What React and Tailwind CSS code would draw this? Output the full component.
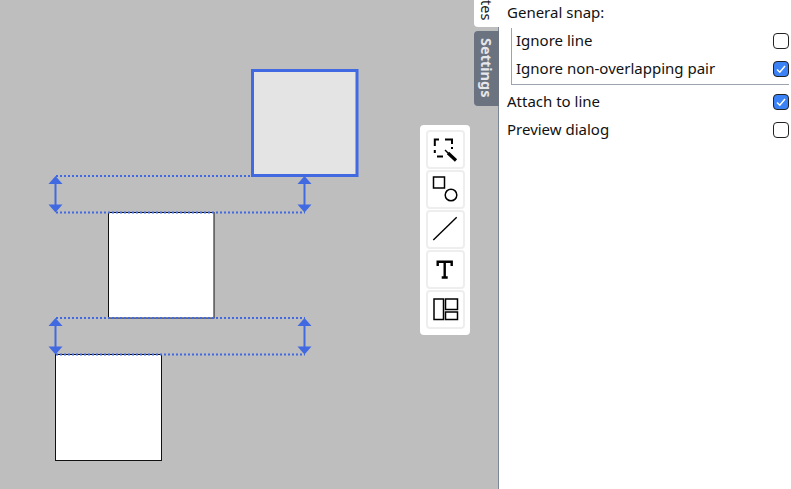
import React from 'react';

const BLUE = '#4169e1';

const Gap = ({ top, bottom, right }) => (
  <g>
    <line x1="56" y1={top} x2={right} y2={top} stroke={BLUE} strokeWidth="2" strokeDasharray="2 2" />
    <line x1="56" y1={bottom} x2="305" y2={bottom} stroke={BLUE} strokeWidth="2" strokeDasharray="2 2" />
    {[55.5, 304.5].map((x) => (
      <g key={x} fill={BLUE}>
        <line x1={x} y1={top + 4} x2={x} y2={bottom - 4} stroke={BLUE} strokeWidth="2" />
        <path d={`M${x} ${top} L${x + 7} ${top + 8} L${x - 7} ${top + 8} Z`} />
        <path d={`M${x} ${bottom} L${x + 7} ${bottom - 8} L${x - 7} ${bottom - 8} Z`} />
      </g>
    ))}
  </g>
);

const Canvas = () => (
  <svg width="498" height="489" className="block">
    <rect x="252.5" y="70.5" width="104.5" height="105" fill="#e4e4e4" stroke={BLUE} strokeWidth="3" />
    <rect x="108.5" y="212.5" width="105.5" height="105.5" fill="#fff" stroke="#111" />
    <rect x="55.5" y="354.5" width="106" height="106" fill="#fff" stroke="#111" />
    <Gap top={176} bottom={212.5} right={251} />
    <Gap top={318} bottom={354.5} right={305} />
  </svg>
);

const ToolButton = ({ children }) => (
  <div className="h-[39px] w-[39px] rounded-[4px] border-2 border-[#eeeeee]">
    <svg width="39" height="39" viewBox="0 0 39 39" fill="none" stroke="#000" className="-m-[2px] block">
      {children}
    </svg>
  </div>
);

const Toolbar = () => (
  <div className="absolute left-[420px] top-[125px] flex w-[50px] flex-col gap-[1px] rounded-[4px] bg-white pb-[6px] pl-[6px] pt-[5px]">
    <ToolButton>
      <path d="M13 9.5H8.8V16M8.8 20V23M11 26.5H17M19 9.5H26V14M26 17V19" strokeWidth="2" />
      <path d="M19 20L23 24" strokeWidth="1.4" />
      <path d="M22 23L30 30.5" strokeWidth="3.2" />
    </ToolButton>
    <ToolButton>
      <rect x="7.5" y="7" width="11" height="11" strokeWidth="1.5" />
      <circle cx="25" cy="25" r="5.8" strokeWidth="1.5" />
    </ToolButton>
    <ToolButton>
      <path d="M7.3 30L30.7 7.3" strokeWidth="1.4" />
    </ToolButton>
    <ToolButton>
      <path d="M11.7 16V11.7H25.7V16M18.7 11.7V27.5M15.7 27.5H21.7" strokeWidth="2.4" />
    </ToolButton>
    <ToolButton>
      <rect x="8" y="9" width="9.5" height="20.5" strokeWidth="1.5" />
      <rect x="19.5" y="9" width="12" height="10.5" strokeWidth="1.5" />
      <rect x="19.5" y="22" width="12" height="7.5" strokeWidth="1.5" />
    </ToolButton>
  </div>
);

const Tabs = () => (
  <div className="absolute left-[474px] top-0 flex w-[25px] flex-col gap-[4px] font-['Noto_Sans',sans-serif] leading-[24px]">
    <div className="flex h-[27px] items-end justify-center rounded-bl-[4px] bg-white pb-[7px] text-[14.5px] text-[#222]">
      <span className="[writing-mode:vertical-rl]">tes</span>
    </div>
    <div className="flex h-[75px] items-start justify-center rounded-l-[4px] bg-[#6b7280] pt-[7px] text-[14.5px] font-bold text-[#e5e7eb]">
      <span className="[writing-mode:vertical-rl]">Settings</span>
    </div>
  </div>
);

const Check = ({ checked }) =>
  checked ? (
    <div className="flex h-[16px] w-[16px] items-center justify-center rounded-[4px] border border-[#222] bg-[#3b82f6]">
      <svg width="12" height="12" viewBox="0 0 12 12" fill="none" stroke="#fff" strokeWidth="1.5">
        <path d="M2 6.5L4.8 9.2L10 3" />
      </svg>
    </div>
  ) : (
    <div className="h-[16px] w-[16px] rounded-[4px] border border-[#222] bg-white" />
  );

const Row = ({ label, checked, className }) => (
  <div className={`flex items-center justify-between ${className}`}>
    <span className="pb-[2px]">{label}</span>
    <Check checked={checked} />
  </div>
);

const Settings = () => (
  <div className="-mt-[2px] flex flex-1 flex-col border-l border-[#7c8796] bg-white pl-[8px] pr-[2px] font-['Noto_Sans',sans-serif] text-[15px] text-[#111]">
    <div className="flex h-[30px] items-center pb-[2px]">General snap:</div>
    <div className="ml-[4px] flex flex-col gap-[2px] border-b border-l border-[#9ca3af] pb-[2px] pl-[4px]">
      <Row label="Ignore line" className="h-[26px]" />
      <Row label="Ignore non-overlapping pair" checked className="h-[26px]" />
    </div>
    <Row label="Attach to line" checked className="mt-[3px] h-[28px]" />
    <Row label="Preview dialog" className="h-[28px]" />
  </div>
);

export default function App() {
  return (
    <div className="relative flex h-[489px] w-[791px] overflow-hidden bg-[#bebebe]">
      <div className="w-[498px] shrink-0">
        <Canvas />
      </div>
      <Toolbar />
      <Settings />
      <Tabs />
    </div>
  );
}
